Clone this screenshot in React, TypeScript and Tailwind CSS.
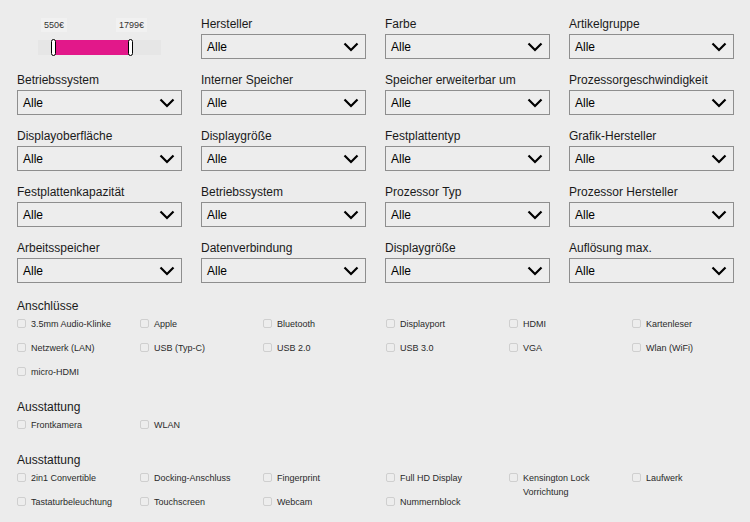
import React from 'react'

const selectRows: (string | null)[][] = [
	[null, 'Hersteller', 'Farbe', 'Artikelgruppe'],
	['Betriebssystem', 'Interner Speicher', 'Speicher erweiterbar um', 'Prozessorgeschwindigkeit'],
	['Displayoberfläche', 'Displaygröße', 'Festplattentyp', 'Grafik-Hersteller'],
	['Festplattenkapazität', 'Betriebssystem', 'Prozessor Typ', 'Prozessor Hersteller'],
	['Arbeitsspeicher', 'Datenverbindung', 'Displaygröße', 'Auflösung max.'],
]

const groups = [
	{
		title: 'Anschlüsse',
		items: [
			'3.5mm Audio-Klinke', 'Apple', 'Bluetooth', 'Displayport', 'HDMI', 'Kartenleser',
			'Netzwerk (LAN)', 'USB (Typ-C)', 'USB 2.0', 'USB 3.0', 'VGA', 'Wlan (WiFi)',
			'micro-HDMI',
		],
	},
	{ title: 'Ausstattung', items: ['Frontkamera', 'WLAN'] },
	{
		title: 'Ausstattung',
		items: [
			'2in1 Convertible', 'Docking-Anschluss', 'Fingerprint', 'Full HD Display',
			'Kensington Lock Vorrichtung', 'Laufwerk',
			'Tastaturbeleuchtung', 'Touchscreen', 'Webcam', 'Nummernblock',
		],
	},
]

const Chevron = () => (
	<svg width="16" height="10" viewBox="0 0 16 10" className="shrink-0">
		<path d="M1.5 1.5 L8 8 L14.5 1.5" fill="none" stroke="#000" strokeWidth="2.2" />
	</svg>
)

const SelectField = ({ label }: { label: string }) => (
	<div className="flex flex-col">
		<div className="h-[14px] text-[12px] leading-[14px] text-[#1a1a1a] mb-[3px] whitespace-nowrap">{label}</div>
		<div className="h-[25px] border border-[#8e8e8e] bg-[#ededed] flex items-center justify-between pl-[5px] pr-[6px]">
			<span className="text-[12px] text-black">Alle</span>
			<Chevron />
		</div>
	</div>
)

const PriceSlider = () => (
	<div className="flex flex-col items-center">
		<div className="relative w-[123px] h-[42px]">
			<span className="absolute left-[3px] top-[1px] px-[3px] bg-[#f1f1f1] text-[9px] leading-[14px] text-[#333]">550€</span>
			<span className="absolute left-[78px] top-[1px] px-[3px] bg-[#f1f1f1] text-[9px] leading-[14px] text-[#333]">1799€</span>
			<div className="absolute left-0 right-0 top-[23px] h-[15px] bg-[#e6e6e6]" />
			<div className="absolute left-[16px] w-[75px] top-[23px] h-[15px] bg-[#e2188a]" />
			<div className="absolute left-[13px] top-[22px] w-[5px] h-[17px] rounded-full bg-white border border-black" />
			<div className="absolute left-[90px] top-[22px] w-[5px] h-[17px] rounded-full bg-white border border-black" />
		</div>
	</div>
)

const CheckItem = ({ label }: { label: string }) => (
	<div className="h-[14px] flex items-start">
		<span className="mt-[2px] w-[9px] h-[9px] border border-[#cfcfcf] rounded-[2px] bg-[#ededed] shrink-0" />
		<span className="ml-[5px] w-[100px] text-[9px] leading-[14px] text-[#2a2a2a]">{label}</span>
	</div>
)

export default function App() {
	return (
		<div className="min-h-screen bg-[#ececec] pl-[17px] pt-[17px]" style={{ fontFamily: '"Liberation Sans", Arial, sans-serif' }}>
			<div className="grid grid-cols-[repeat(4,165px)] gap-x-[19px] gap-y-[14px]">
				{selectRows.flat().map((label, i) =>
					label === null ? <PriceSlider key={i} /> : <SelectField key={i} label={label} />
				)}
			</div>
			<div className="mt-[16px] flex flex-col gap-[21px]">
				{groups.map((g, gi) => (
					<div key={gi}>
						<div className="text-[12px] leading-[14px] text-[#1a1a1a]">{g.title}</div>
						<div className="mt-[4px] grid grid-cols-[repeat(5,123px)_100px] auto-rows-[14px] gap-y-[10px]">
							{g.items.map((it) => (
								<CheckItem key={it} label={it} />
							))}
						</div>
					</div>
				))}
			</div>
		</div>
	)
}
